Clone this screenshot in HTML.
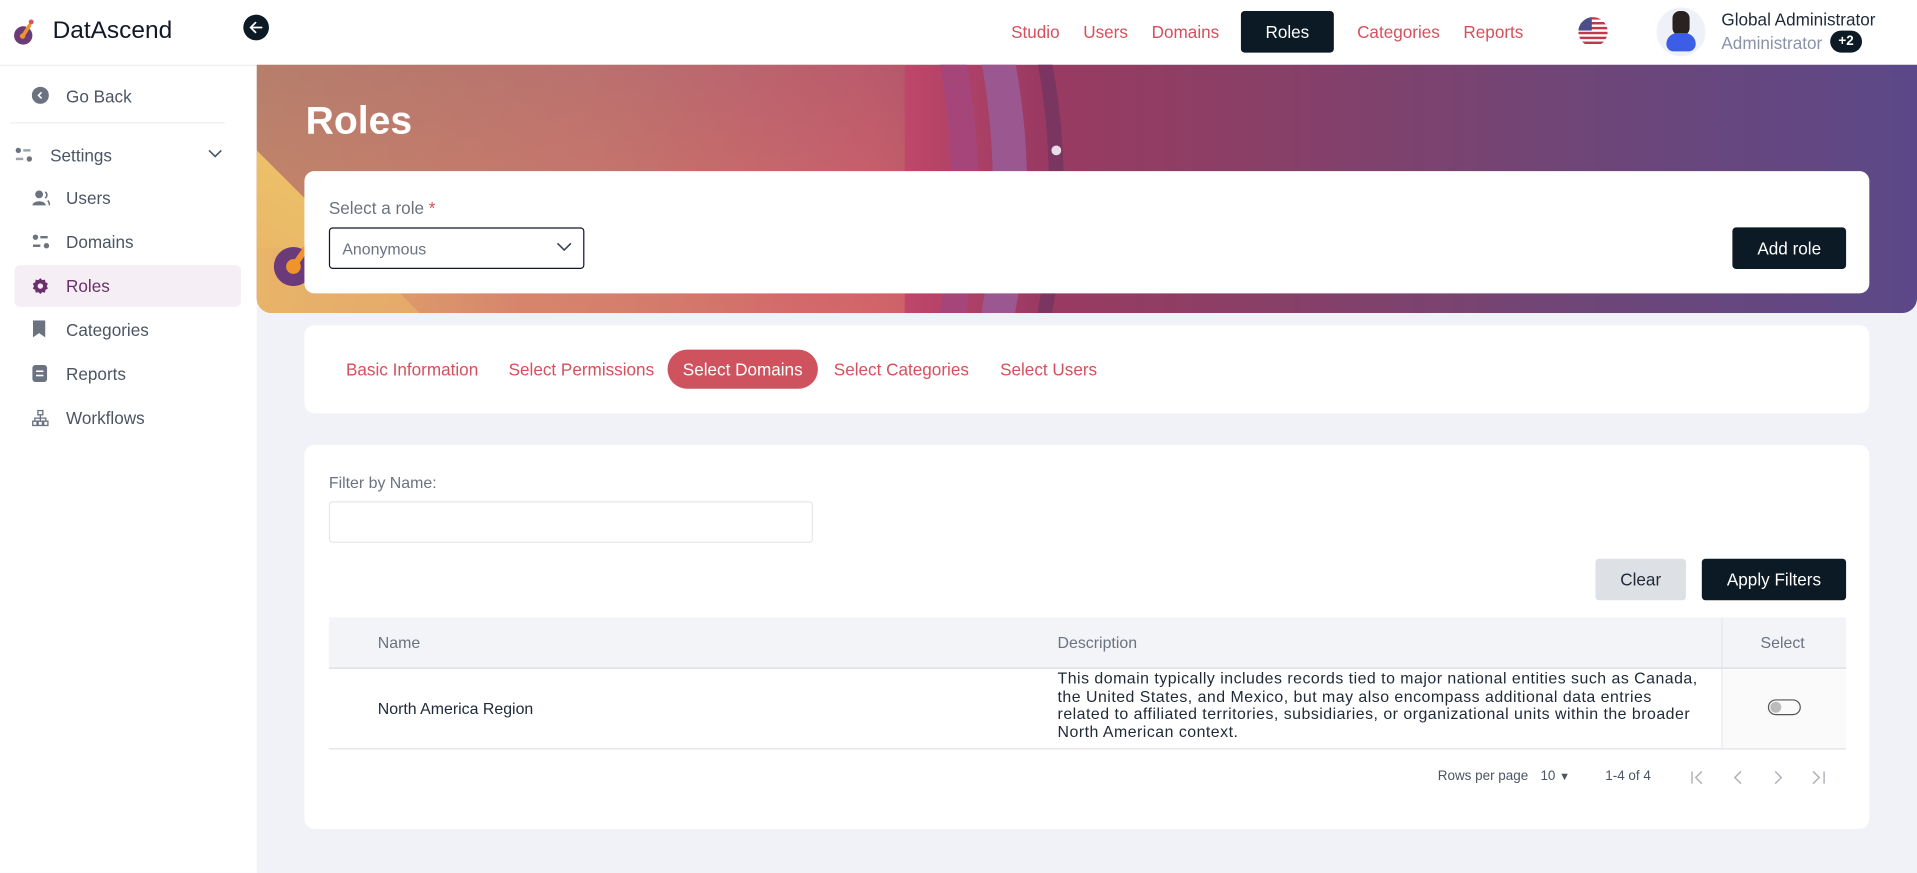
<!DOCTYPE html>
<html><head><meta charset="utf-8">
<style>
*{box-sizing:border-box;margin:0;padding:0}
html,body{width:1917px;height:873px;overflow:hidden;background:#f1f2f7;font-family:"Liberation Sans",sans-serif}
#w{position:absolute;left:0;top:0;width:1568px;height:714px;transform:scale(1.22258);transform-origin:0 0;background:#f1f2f7;overflow:hidden}
.a{position:absolute}
.nav{position:absolute;top:18px;font-size:14px;color:#d64f5c}
.sb{position:absolute;left:54px;font-size:14px;color:#4b5563}
.ic{position:absolute;left:26px}
.tab{position:absolute;top:294px;font-size:14px;color:#d64f5c}
</style></head><body><div id="w">
<div class="a" style="left:0;top:0;width:1568px;height:53px;background:#fff"></div>
<div class="a" style="left:0;top:53px;width:210px;height:661px;background:#fff;border-top:1px solid #eceef2"></div>
<svg class="a" style="left:8px;top:14px" width="24" height="26" viewBox="0 0 24 26">
<circle cx="11" cy="15" r="7.5" fill="#6b3a7a"/><line x1="11" y1="15" x2="16" y2="7" stroke="#f0932b" stroke-width="3" stroke-linecap="round"/><circle cx="10.5" cy="15.5" r="2.2" fill="#f0932b"/><circle cx="17.5" cy="4" r="2" fill="#e0505a"/></svg>
<div class="a" style="left:43px;top:14px;font-size:20px;color:#111827">DatAscend</div>
<div class="a" style="left:199px;top:12px;width:21px;height:21px;border-radius:50%;background:#0b1a24"></div>
<svg class="a" style="left:203px;top:16px" width="13" height="13" viewBox="0 0 13 13"><path d="M11 6.5H2M6 2.5L2 6.5L6 10.5" stroke="#fff" stroke-width="1.4" fill="none" stroke-linecap="round"/></svg>
<div class="nav" style="left:827px">Studio</div>
<div class="nav" style="left:886px">Users</div>
<div class="nav" style="left:942px">Domains</div>
<div class="a" style="left:1015px;top:9px;width:76px;height:34px;background:#0b1a24;border-radius:3px;color:#fff;font-size:14px;text-align:center;line-height:34px">Roles</div>
<div class="nav" style="left:1110px">Categories</div>
<div class="nav" style="left:1197px">Reports</div>
<svg class="a" style="left:1291px;top:14px" width="24" height="24" viewBox="0 0 24 24"><defs><clipPath id="c"><circle cx="12" cy="12" r="12"/></clipPath></defs><g clip-path="url(#c)"><rect width="24" height="24" fill="#fff"/><g fill="#c0394a"><rect y="0" width="24" height="2"/><rect y="4" width="24" height="2"/><rect y="8" width="24" height="2"/><rect y="12" width="24" height="2"/><rect y="16" width="24" height="2"/><rect y="20" width="24" height="2"/></g><rect width="11" height="11" fill="#4a4f8a"/></g></svg>
<div class="a" style="left:1355px;top:6px;width:40px;height:40px;border-radius:50%;background:#eef1f8"></div>
<div class="a" style="left:1368px;top:9px;width:14px;height:20px;border-radius:6px;background:#2a2220"></div>
<div class="a" style="left:1363px;top:27px;width:24px;height:15px;border-radius:12px 12px 8px 8px;background:#3b5de7"></div>
<div class="a" style="left:1408px;top:8px;font-size:14px;color:#1f2937">Global Administrator</div>
<div class="a" style="left:1408px;top:27px;font-size:14px;color:#8a93a6">Administrator</div>
<div class="a" style="left:1497px;top:25px;width:26px;height:18px;border-radius:9px;background:#0b1a24;color:#fff;font-size:11px;font-weight:bold;text-align:center;line-height:18px">+2</div>
<svg class="ic" style="top:71px" width="14" height="14"><circle cx="7" cy="7" r="7" fill="#6b7280"/><path d="M8 4.5L5.5 7L8 9.5" stroke="#fff" stroke-width="1.3" fill="none"/></svg>
<div class="sb" style="top:71px">Go Back</div>
<div class="a" style="left:8px;top:100px;width:176px;height:1px;background:#eceef2"></div>
<svg class="a" style="left:12px;top:120px" width="16" height="14"><circle cx="3" cy="3" r="2.2" fill="#6b7280"/><rect x="7" y="2" width="6" height="2" fill="#9ca3af"/><rect x="1" y="9" width="6" height="2" fill="#9ca3af"/><circle cx="12" cy="10" r="2.2" fill="#6b7280"/></svg>
<div class="a" style="left:41px;top:119px;font-size:14px;color:#4b5563">Settings</div>
<svg class="a" style="left:170px;top:122px" width="12" height="8"><path d="M1 1L6 6L11 1" stroke="#4b5563" stroke-width="1.3" fill="none"/></svg>
<svg class="ic" style="top:155px" width="15" height="14"><circle cx="6" cy="4" r="3.2" fill="#6b7280"/><path d="M0.5 13C1 8.5 11 8.5 11.5 13Z" fill="#6b7280"/><path d="M11 2a3 3 0 010 5M13 9c1 1 1.5 2 1.5 4" stroke="#6b7280" stroke-width="1.3" fill="none"/></svg>
<div class="sb" style="top:154px">Users</div>
<svg class="ic" style="top:191px" width="16" height="14"><circle cx="3" cy="3" r="2.2" fill="#6b7280"/><rect x="7" y="2" width="6" height="2" fill="#6b7280"/><rect x="1" y="9" width="6" height="2" fill="#6b7280"/><circle cx="12" cy="10" r="2.2" fill="#6b7280"/></svg>
<div class="sb" style="top:190px">Domains</div>
<div class="a" style="left:12px;top:217px;width:185px;height:34px;border-radius:4px;background:#f5eef4"></div>
<svg class="ic" style="top:227px" width="14" height="14" viewBox="0 0 14 14"><path d="M7 0.5l1.6 1.6 2.2-.4.4 2.2 2 1.1-1 2 1 2-2 1.1-.4 2.2-2.2-.4L7 13.5l-1.6-1.6-2.2.4-.4-2.2-2-1.1 1-2-1-2 2-1.1.4-2.2 2.2.4z" fill="#6b2f6b"/><circle cx="7" cy="7" r="2.2" fill="#f5eef4"/></svg>
<div class="sb" style="top:226px;color:#6b2f6b">Roles</div>
<svg class="ic" style="top:262px" width="12" height="15"><path d="M1 0H11V14L6 10.5L1 14Z" fill="#6b7280"/></svg>
<div class="sb" style="top:262px">Categories</div>
<svg class="ic" style="top:298px" width="13" height="15"><rect x="0.5" y="0.5" width="12" height="14" rx="2.5" fill="#6b7280"/><rect x="3.5" y="5" width="6" height="1.3" fill="#fff"/><rect x="3.5" y="8.5" width="6" height="1.3" fill="#fff"/></svg>
<div class="sb" style="top:298px">Reports</div>
<svg class="ic" style="top:335px" width="14" height="14" fill="none" stroke="#6b7280" stroke-width="1.1"><rect x="5" y="0.8" width="4" height="3.5"/><path d="M7 4.3V7M2.5 9.5V7H11.5V9.5M7 7V9.5"/><rect x="0.8" y="9.5" width="3.5" height="3.5"/><rect x="5.2" y="9.5" width="3.5" height="3.5"/><rect x="9.7" y="9.5" width="3.5" height="3.5"/></svg>
<div class="sb" style="top:334px">Workflows</div>
<div class="a" style="left:210px;top:53px;width:1358px;height:203px;border-radius:0 0 12px 12px;overflow:hidden;background:linear-gradient(90deg,#c0826a 0%,#c86d6e 20%,#c94a6c 37%,#9a3a62 47%,#8a3f66 60%,#6e4678 80%,#5c4888 100%)">
 <div class="a" style="left:0;top:0;width:530px;height:203px;background:linear-gradient(180deg,rgba(160,120,110,.35),rgba(230,150,100,.35))"></div>
 <div class="a" style="left:0;top:70px;width:200px;height:200px;background:linear-gradient(160deg,#ecc068,#e4a56a);transform:rotate(45deg);transform-origin:0 0"></div>
 <div class="a" style="left:0;top:150px;width:430px;height:60px;background:linear-gradient(90deg,rgba(232,180,105,.9),rgba(220,140,110,.5),rgba(210,110,110,0))"></div>
 <div class="a" style="left:-740px;top:-500px;width:1330px;height:1200px;border-radius:50%;border-right:22px solid #a6457a;"></div>
 <div class="a" style="left:-690px;top:-500px;width:1320px;height:1200px;border-radius:50%;border-right:28px solid #9b5890;"></div>
 <div class="a" style="left:-640px;top:-500px;width:1300px;height:1200px;border-radius:50%;border-right:12px solid #7a3560;"></div>
 <div class="a" style="left:650px;top:66px;width:8px;height:8px;border-radius:50%;background:#e6dde8"></div>
 <svg class="a" style="left:8px;top:140px" width="40" height="50"><circle cx="22" cy="25" r="16" fill="#6b3a7a"/><circle cx="22" cy="25" r="6" fill="#f0932b"/><line x1="22" y1="25" x2="34" y2="8" stroke="#f0932b" stroke-width="5"/></svg>
</div>
<div class="a" style="left:250px;top:80px;font-size:32px;font-weight:bold;color:#fff">Roles</div>
<div class="a" style="left:249px;top:140px;width:1280px;height:100px;background:#fff;border-radius:8px"></div>
<div class="a" style="left:269px;top:162px;font-size:14px;color:#6b7280">Select a role <span style="color:#d64f5c">*</span></div>
<div class="a" style="left:269px;top:186px;width:209px;height:34px;border:1px solid #111827;border-radius:3px"></div>
<div class="a" style="left:280px;top:196px;font-size:13px;color:#6b7280">Anonymous</div>
<svg class="a" style="left:455px;top:198px" width="13" height="8"><path d="M1 1L6.5 6.5L12 1" stroke="#374151" stroke-width="1.3" fill="none"/></svg>
<div class="a" style="left:1417px;top:186px;width:93px;height:34px;background:#0b1a24;border-radius:3px;color:#fff;font-size:14px;text-align:center;line-height:34px">Add role</div>
<div class="a" style="left:249px;top:266px;width:1280px;height:72px;background:#fff;border-radius:8px"></div>
<div class="tab" style="left:283px">Basic Information</div>
<div class="tab" style="left:416px">Select Permissions</div>
<div class="a" style="left:546px;top:286px;width:123px;height:32px;border-radius:16px;background:#cf525f;color:#fff;font-size:14px;text-align:center;line-height:32px">Select Domains</div>
<div class="tab" style="left:682px">Select Categories</div>
<div class="tab" style="left:818px">Select Users</div>
<div class="a" style="left:249px;top:364px;width:1280px;height:314px;background:#fff;border-radius:8px"></div>
<div class="a" style="left:269px;top:387px;font-size:13px;color:#6b7280">Filter by Name:</div>
<div class="a" style="left:269px;top:410px;width:396px;height:34px;border:1px solid #e5e7eb;border-radius:3px"></div>
<div class="a" style="left:1305px;top:457px;width:74px;height:34px;background:#dde0e4;border-radius:3px;color:#1f2937;font-size:14px;text-align:center;line-height:34px">Clear</div>
<div class="a" style="left:1392px;top:457px;width:118px;height:34px;background:#0b1a24;border-radius:3px;color:#fff;font-size:14px;text-align:center;line-height:34px">Apply Filters</div>
<div class="a" style="left:269px;top:505px;width:1241px;height:42px;background:#f3f4f8;border-bottom:1px solid #d9dbe0"></div>
<div class="a" style="left:1408px;top:505px;width:1px;height:107px;background:#e5e7eb"></div>
<div class="a" style="left:1409px;top:548px;width:101px;height:64px;background:#fafafa"></div>
<div class="a" style="left:309px;top:518px;font-size:13px;color:#6b7280">Name</div>
<div class="a" style="left:865px;top:518px;font-size:13px;color:#6b7280">Description</div>
<div class="a" style="left:1440px;top:518px;font-size:13px;color:#6b7280">Select</div>
<div class="a" style="left:309px;top:572px;font-size:13px;color:#1f2937">North America Region</div>
<div class="a" style="left:865px;top:548px;width:530px;font-size:13px;line-height:14.5px;letter-spacing:0.4px;color:#1f2937">This domain typically includes records tied to major national entities such as Canada, the United States, and Mexico, but may also encompass additional data entries related to affiliated territories, subsidiaries, or organizational units within the broader North American context.</div>
<div class="a" style="left:1446px;top:572px;width:27px;height:13px;border:1px solid #555;border-radius:7px"></div>
<div class="a" style="left:1448px;top:574px;width:9px;height:9px;border-radius:50%;background:#bbb"></div>
<div class="a" style="left:269px;top:612px;width:1241px;height:1px;background:#e0e2e6"></div>
<div class="a" style="left:1176px;top:629px;font-size:11px;color:#4b5563">Rows per page</div>
<div class="a" style="left:1260px;top:629px;font-size:11px;color:#4b5563">10 <span style="font-size:9px">▼</span></div>
<div class="a" style="left:1313px;top:629px;font-size:11px;color:#4b5563">1-4 of 4</div>
<svg class="a" style="left:1382px;top:629px" width="120" height="14" fill="none" stroke="#aeb3bb" stroke-width="1.2"><path d="M2 2V12M10 2L5 7L10 12"/><path d="M42 2L37 7L42 12"/><path d="M70 2L75 7L70 12"/><path d="M101 2L106 7L101 12M110 2V12"/></svg>
</div></body></html>
